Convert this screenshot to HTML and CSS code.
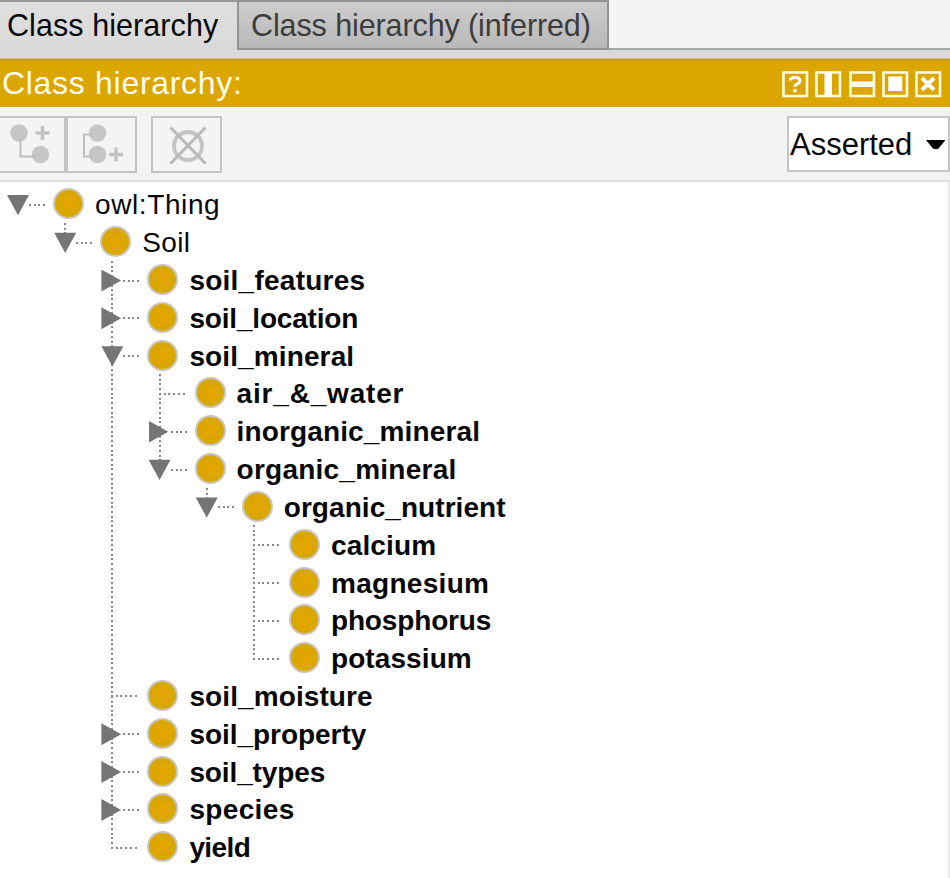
FILE: index.html
```html
<!DOCTYPE html>
<html lang="en">
<head>
<meta charset="utf-8">
<title>Class hierarchy</title>
<link rel="stylesheet" href="styles.css">
</head>
<body>
<nav class="tabs">
  <div class="tab active">Class hierarchy</div>
  <div class="tab idle">Class hierarchy (inferred)</div>
  <div class="tab-space"></div>
</nav>
<header class="title-bar">
  <h1>Class hierarchy:</h1>
  <div class="window-icons">
    <svg viewBox="0 0 27 27"><path class="frame" d="M1.5 1.5h23.5v23.5h-23.5z"/><path d="M8.300 9.500q0-3 4.800-3t4.800 3.200q0 2.200-2.500 3.200t-2.500 2.800" fill="none" stroke="#fff" stroke-width="3"/><path d="M11.300 18h3.400v3.200h-3.400z"/></svg>
    <svg viewBox="0 0 27 27"><path class="frame" d="M1.5 1.5h23.5v23.5h-23.5z"/><path d="M9.500 2h7.500v23h-7.500z"/></svg>
    <svg viewBox="0 0 27 27"><path class="frame" d="M1.5 1.5h23.5v23.5h-23.5z"/><path d="M2 10.500h23v5.500h-23z"/></svg>
    <svg viewBox="0 0 27 27"><path class="frame" d="M1.5 1.5h23.5v23.5h-23.5z"/><path d="M6.300 5.500h14v14.500h-14z"/></svg>
    <svg viewBox="0 0 27 27"><path class="frame" d="M1.5 1.5h23.5v23.5h-23.5z"/><path d="M7 7l12 12M19 7l-12 12" stroke="#fff" stroke-width="4"/></svg>
  </div>
</header>
<section class="toolbar">
  <div class="tool first"><svg viewBox="0 0 65 54"><circle cx="19" cy="15" r="8.700"/><circle cx="40.500" cy="36.500" r="8.700"/><path d="M20.500 20v18.500h15" class="link"/><path d="M42.500 8v14M35.500 15h14" class="plus"/></svg></div>
  <div class="tool second"><svg viewBox="0 0 68 54"><circle cx="29.500" cy="15" r="8.700"/><circle cx="29.500" cy="36.500" r="8.700"/><path d="M25 16.500h-9v22h9" class="link"/><path d="M48 29.500v14M41 36.500h14" class="plus"/></svg></div>
  <div class="tool third"><svg viewBox="0 0 68 54"><circle cx="35" cy="28" r="14" class="ring"/><path d="M17.500 9.500l35 36M52.500 9.500l-35 36" class="cross"/></svg></div>
  <div class="select"><span>Asserted</span><svg viewBox="0 0 20 10"><path d="M0 0h19.500l-7 8.500q-2.750 1.500-5.500 0z"/></svg></div>
</section>
<main class="tree">
  <ul class="root">
    <li>
      <div class="row"><i class="twist open"></i><i class="dots"></i><i class="ball"></i><span class="plain" style="letter-spacing:.6px">owl:Thing</span></div>
      <ul>
        <li>
          <div class="row"><i class="twist open"></i><i class="dots"></i><i class="ball"></i><span class="plain" style="letter-spacing:.4px">Soil</span></div>
          <ul>
            <li><div class="row"><i class="twist shut"></i><i class="dots"></i><i class="ball"></i><span style="letter-spacing:.25px">soil_features</span></div></li>
            <li><div class="row"><i class="twist shut"></i><i class="dots"></i><i class="ball"></i><span style="letter-spacing:-.18px">soil_location</span></div></li>
            <li>
              <div class="row"><i class="twist open"></i><i class="dots"></i><i class="ball"></i><span style="letter-spacing:.12px">soil_mineral</span></div>
              <ul>
                <li><div class="row"><i class="dots leaf"></i><i class="ball"></i><span style="letter-spacing:.82px">air_&amp;_water</span></div></li>
                <li><div class="row"><i class="twist shut"></i><i class="dots"></i><i class="ball"></i><span style="letter-spacing:.14px">inorganic_mineral</span></div></li>
                <li>
                  <div class="row"><i class="twist open"></i><i class="dots"></i><i class="ball"></i><span style="letter-spacing:.24px">organic_mineral</span></div>
                  <ul>
                    <li>
                      <div class="row"><i class="twist open"></i><i class="dots"></i><i class="ball"></i><span style="letter-spacing:.06px">organic_nutrient</span></div>
                      <ul>
                        <li><div class="row"><i class="dots leaf"></i><i class="ball"></i><span style="letter-spacing:.15px">calcium</span></div></li>
                        <li><div class="row"><i class="dots leaf"></i><i class="ball"></i><span style="letter-spacing:.3px">magnesium</span></div></li>
                        <li><div class="row"><i class="dots leaf"></i><i class="ball"></i><span style="letter-spacing:-.15px">phosphorus</span></div></li>
                        <li><div class="row"><i class="dots leaf"></i><i class="ball"></i><span style="letter-spacing:.1px">potassium</span></div></li>
                      </ul>
                    </li>
                  </ul>
                </li>
              </ul>
            </li>
            <li><div class="row"><i class="dots leaf"></i><i class="ball"></i><span style="letter-spacing:.1px">soil_moisture</span></div></li>
            <li><div class="row"><i class="twist shut"></i><i class="dots"></i><i class="ball"></i><span style="letter-spacing:-.04px">soil_property</span></div></li>
            <li><div class="row"><i class="twist shut"></i><i class="dots"></i><i class="ball"></i><span style="letter-spacing:-.12px">soil_types</span></div></li>
            <li><div class="row"><i class="twist shut"></i><i class="dots"></i><i class="ball"></i><span style="letter-spacing:.35px">species</span></div></li>
            <li><div class="row"><i class="dots leaf"></i><i class="ball"></i><span style="letter-spacing:-.6px">yield</span></div></li>
          </ul>
        </li>
      </ul>
    </li>
  </ul>
</main>
</body>
</html>
```
FILE: styles.css
```css
* { box-sizing: border-box; }
body {
  margin: 0;
  width: 950px;
  height: 878px;
  overflow: hidden;
  display: flex;
  flex-direction: column;
  background: #fff;
  font-family: "Liberation Sans", Arial, sans-serif;
  color: #080808;
}
.tabs { display: flex; height: 59px; flex: none; background: #dcd9dd; border-bottom: 1px solid #d8c181; }
.tab { font-size: 30.5px; line-height: 47px; white-space: nowrap; border-top: 2px solid #999; }
.active { width: 237px; height: 58px; padding-left: 7px; letter-spacing: .07px; background: linear-gradient(#dedede, #dcdcdc 60%, #d8d8d8 80%, #dcd9dd); }
.idle { width: 372px; height: 50px; padding-left: 12px; letter-spacing: -.1px; color: #3c3c3c; background: linear-gradient(#cdcdcd, #b8b8b8); border: 2px solid #939696; border-top-color: #929292; }
.tab-space { flex: 1; height: 50px; background: #f4f4f4; border-bottom: 2px solid #a2aaa7; }
.title-bar { display: flex; justify-content: space-between; height: 48px; flex: none; padding: 0 8px 0 2px; background: #dba600; border-top: 2px solid #c9a020; border-bottom: 1px solid #d0a824; }
h1 { margin: 0; font-size: 32px; font-weight: 400; line-height: 45px; letter-spacing: .7px; color: #fffdf0; }
.window-icons { display: flex; gap: 6.2px; padding-top: 10px; }
.window-icons svg { width: 27px; height: 27px; fill: #fff; }
.window-icons .frame { fill: none; stroke: #fffce0; stroke-width: 2.6; }
.toolbar { display: flex; height: 75px; flex: none; padding-top: 9px; background: #f3f3f3; border-bottom: 2px solid #dfdfdf; }
.tool { height: 57px; border: 2px solid #c3c3c3; background: #f4f4f4; }
.tool svg { display: block; height: 54px; fill: #c6c6c6; }
.first { width: 66px; border-left: 0; }
.first svg { width: 65px; }
.second { width: 71px; }
.second svg, .third svg { width: 68px; }
.third { width: 71px; margin-left: 14px; }
.tool .link { fill: none; stroke: #bdbdbd; stroke-width: 2; }
.tool .plus { stroke: #c2c2c2; stroke-width: 3.5; }
.tool .ring { fill: none; stroke: #c4c4c4; stroke-width: 4; }
.tool .cross { stroke: #b9b9b9; stroke-width: 3; }
.select { display: flex; align-items: center; width: 163px; height: 56px; margin-left: auto; padding: 2px 0 0 1px; background: #fff; border: 2px solid #c5c5c5; font-size: 31px; }
.select svg { width: 20px; height: 10px; margin-left: 14px; }
.tree { flex: 1; padding: 3px 0 0 17px; border-right: 2px solid #e8e8e8; }
ul { margin: 0; padding: 0; list-style: none; }
ul ul { margin-left: 47.2px; }
li { background: repeating-linear-gradient(#888 0 2px, transparent 2px 4.73px) 0 0 / 2px 100% no-repeat; }
li:last-child { background-size: 2px 21px; }
.root > li { background: none; }
.row { display: flex; align-items: center; height: 37.82px; }
.twist { width: 22px; height: 22px; margin: 2px 0 0 -10px; flex: none; background: #757575; }
.open { clip-path: polygon(0 5%, 100% 5%, 50% 97%); }
.shut { clip-path: polygon(0 0, 90% 50%, 0 100%); }
.dots { width: 16px; height: 2px; margin: 2px 8px 0 0; flex: none; background: repeating-linear-gradient(90deg, #888 0 2px, transparent 2px 4.73px); }
.leaf { width: 28px; }
.ball { width: 31px; height: 31px; flex: none; border: 2px solid #ccc4ba; border-radius: 50%; background: radial-gradient(#e3a500 20%, #d4a900 75%); }
.row span { margin-left: 11px; padding-top: 3px; font-size: 28px; font-weight: 700; line-height: 34px; white-space: nowrap; }
.row .plain { font-weight: 400; }
```
